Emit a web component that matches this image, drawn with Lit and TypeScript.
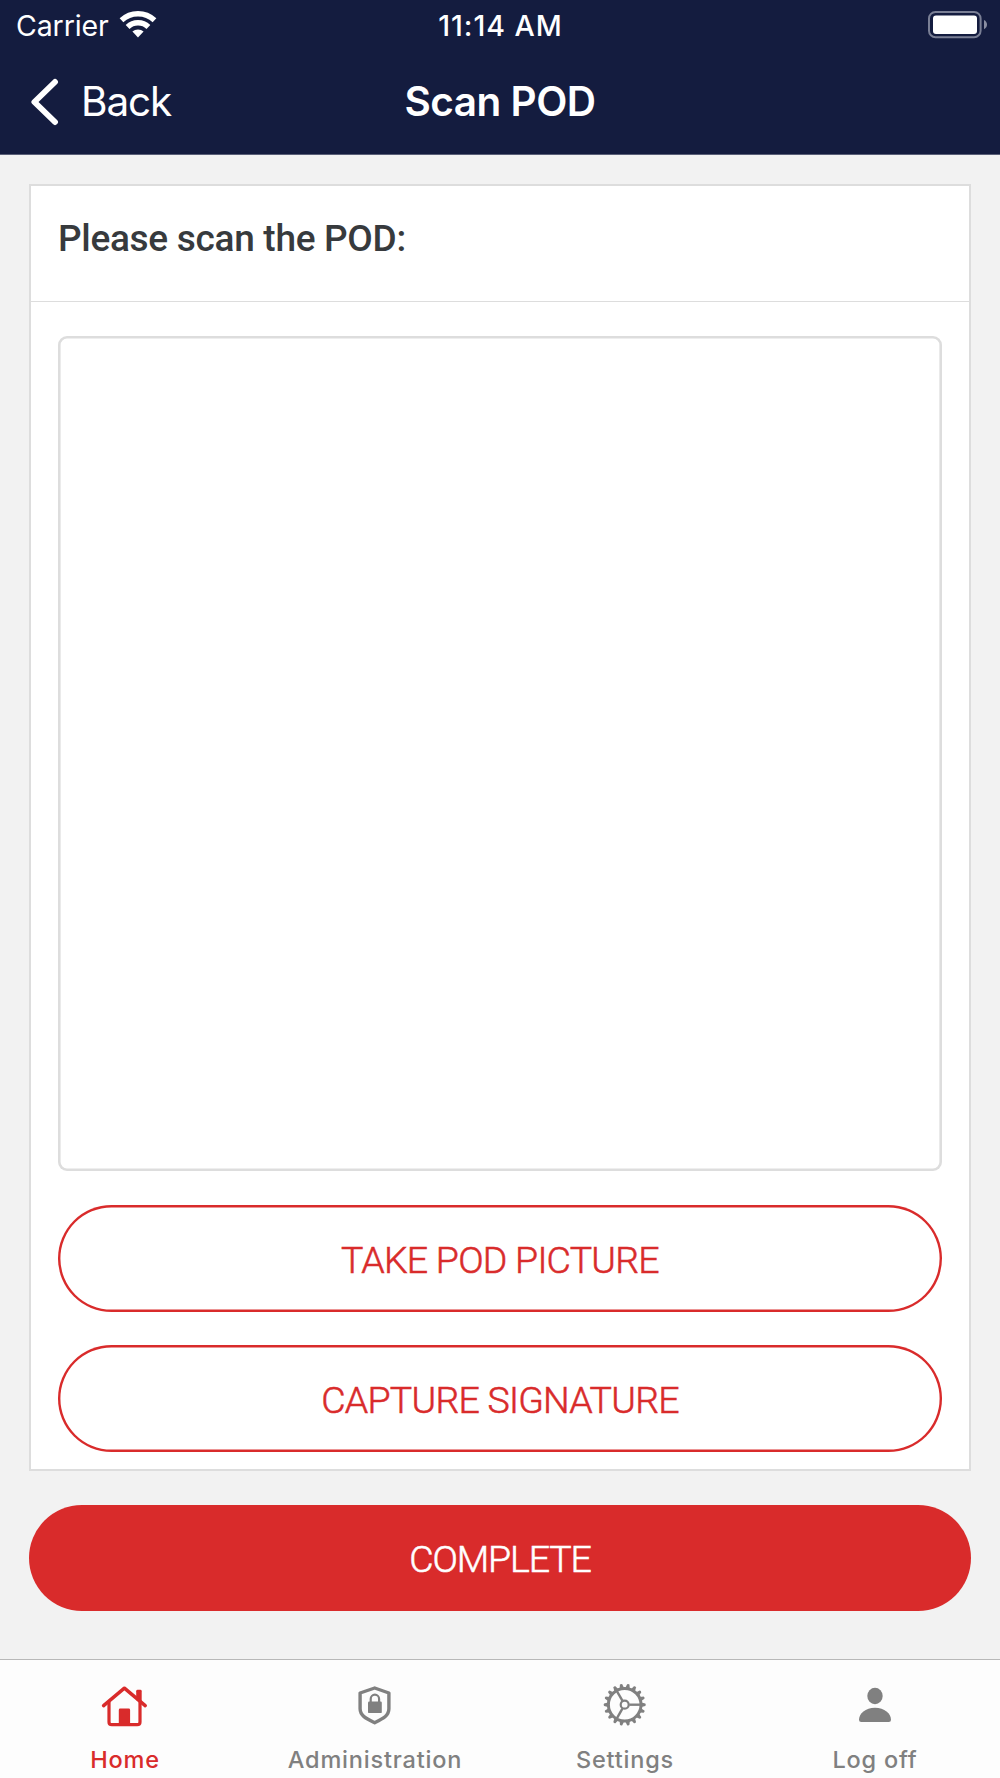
import { LitElement, html, css, svg } from "lit";
import { customElement, property } from "lit/decorators.js";

const teeth = Array.from({ length: 18 }, (_, i) => i * 20);

const icons = {
  home: svg`
    <path d="M36.2 21V12.2q0-1.4 1.4-1.4h2.7q1.4 0 1.4 1.4v13z" fill="currentColor"/>
    <path d="M3.6 26.6L24.4 9.2 45.2 26.6" fill="none" stroke="currentColor" stroke-width="3.5" stroke-linecap="round" stroke-linejoin="round"/>
    <path d="M9 23V42.9Q9 45.7 11.8 45.7H37.2Q40 45.7 40 42.9V23" fill="none" stroke="currentColor" stroke-width="3.2"/>
    <path d="M18.8 46V31q0-1.4 1.4-1.4h8.5q1.4 0 1.4 1.4v15z" fill="currentColor"/>`,
  shield: svg`
    <path d="M24.7 9L38.9 14V29.8C38.9 36.8 33 39.6 24.7 43.7 16.4 39.6 10.1 36.8 10.1 29.8V14z" fill="none" stroke="currentColor" stroke-width="3.4" stroke-linejoin="round"/>
    <rect x="18" y="22.6" width="13.8" height="11.5" rx="1.2" fill="currentColor"/>
    <path d="M20.7 23.5V19.9a4.2 4.2 0 0 1 8.4 0V23.5" fill="none" stroke="currentColor" stroke-width="2.2"/>`,
  gear: svg`
    <g transform="translate(24.7 25.7)" fill="none" stroke="currentColor">
      <circle r="16.3" stroke-width="3"/>
      <circle r="4" stroke-width="2.2"/>
      ${[0, 120, 240].map((a) => svg`<path d="M4.6 0H16" stroke-width="2.4" transform="rotate(${a})"/>`)}
      ${teeth.map((a) => svg`<path d="M16.8-2.2L20.6-1.2Q21.6 0 20.6 1.2L16.8 2.2z" fill="currentColor" stroke="none" transform="rotate(${a})"/>`)}
    </g>`,
  person: svg`
    <ellipse cx="25" cy="17" rx="7.7" ry="8.3" fill="currentColor"/>
    <path d="M11.2 43Q9 43 9 40.8C9 34.5 15.5 28.7 25 28.7S41 34.5 41 40.8Q41 43 38.8 43z" fill="currentColor"/>`,
};

type IconName = keyof typeof icons;

@customElement("tab-item")
class TabItem extends LitElement {
  @property() icon: IconName = "home";
  @property() label = "";

  static styles = css`
    :host { display: flex; flex-direction: column; align-items: center; flex: 1; padding-top: 19px; }
    .icon { width: 50px; height: 50px; display: block; }
    .label { margin-top: 16px; font: 450 23.5px/30px Inter, sans-serif; white-space: nowrap; letter-spacing: 0.8px; }
  `;

  render() {
    return html`
      <svg class="icon" viewBox="0 0 50 50">${icons[this.icon]}</svg>
      <span class="label">${this.label}</span>`;
  }
}

@customElement("app-root")
class AppRoot extends LitElement {
  static styles = css`
    :host { display: block; }
    * { box-sizing: border-box; }
    .screen { height: 1778px; display: flex; flex-direction: column; background: #f2f2f2; overflow: hidden; }
    .header { height: 155px; flex: none; background: #141c3f; color: #fff; border-bottom: 1px solid #5a5f78; font-family: Inter, sans-serif; }
    .status { height: 51px; display: grid; grid-template-columns: 1fr auto 1fr; align-items: center; padding: 0 13px 0 16px; font-size: 28.5px; line-height: 51px; }
    .carrier { display: flex; align-items: center; gap: 10px; }
    .carrier span { letter-spacing: -0.1px; }
    .clock { font-weight: 500; letter-spacing: 1px; margin-left: -2px; }
    .wifi { width: 38px; height: 30px; margin-top: -4px; }
    .battery { width: 60px; height: 28px; justify-self: end; margin-top: -2px; }
    .nav { height: 102px; display: grid; grid-template-columns: 1fr auto 1fr; align-items: center; padding: 0 30px; font-size: 40.5px; line-height: 102px; }
    .back { display: flex; align-items: center; gap: 21px; letter-spacing: -1.1px; }
    .chevron { width: 30px; height: 48px; margin-top: -1px; }
    .title { font-weight: 600; letter-spacing: -0.5px; }
    .main { flex: 1; padding: 29px 29px 0; font-family: Roboto, "Open Sans", sans-serif; }
    .card { height: 1287px; border: 2px solid #ddd; background: #fff; }
    .heading { height: 116px; padding: 27px 27px 0; border-bottom: 1px solid #ddd; color: #373a3d; font-weight: 500; font-size: 37px; line-height: 52px; letter-spacing: -0.3px; }
    .body { padding: 34px 27px 0; }
    .preview { height: 835px; box-shadow: inset 0 0 0 2.6px #ddd; border-radius: 9px; margin-bottom: 34px; }
    .button { display: flex; align-items: center; justify-content: center; height: 107px; border-radius: 54px; font-size: 37.5px; font-weight: 300; -webkit-text-stroke: 0.55px currentColor; letter-spacing: -0.75px; padding-top: 3px; }
    .outline { box-shadow: inset 0 0 0 2.4px #d92b2b; color: #d92b2b; margin-bottom: 33px; }
    .solid { background: #d92b2b; color: #fff; margin-top: 34px; height: 106px; padding-top: 2px; letter-spacing: -1.1px; }
    .tabs { height: 119px; flex: none; display: flex; border-top: 1px solid #b8b8b8; background: #fdfdfd; color: #808080; }
    .active { color: #d92b2b; }
  `;

  render() {
    return html`
      <div class="screen">
        <header class="header">
          <div class="status">
            <div class="carrier"><span>Carrier</span>
              <svg class="wifi" viewBox="0 0 38 30" fill="none" stroke="#fff">
                <path d="M2.5 11.3A24 24 0 0 1 35.5 11.3" stroke-width="5.4"/>
                <path d="M8.6 18A14.8 14.8 0 0 1 29.4 18" stroke-width="5.4"/>
                <path d="M19 28.4L13.4 22.6A8.2 8.2 0 0 1 24.6 22.6z" fill="#fff" stroke="none"/>
              </svg>
            </div>
            <span class="clock">11:14 AM</span>
            <svg class="battery" viewBox="0 0 60 28">
              <rect x="2" y="1" width="51.6" height="25.2" rx="6.5" fill="none" stroke="#7a7f95" stroke-width="2"/>
              <rect x="6" y="4.5" width="44" height="18.4" rx="3" fill="#fff"/>
              <path d="M57 9Q60 10.5 60 13.6T57 18.2z" fill="#8a8ea2"/>
            </svg>
          </div>
          <nav class="nav">
            <div class="back">
              <svg class="chevron" viewBox="0 0 30 48"><path d="M25 4L4.4 24 25 44" fill="none" stroke="#fff" stroke-width="5.9" stroke-linecap="round" stroke-linejoin="round"/></svg>
              <span>Back</span>
            </div>
            <span class="title">Scan POD</span>
          </nav>
        </header>
        <main class="main">
          <section class="card">
            <div class="heading">Please scan the POD:</div>
            <div class="body">
              <div class="preview"></div>
              <div class="button outline">TAKE POD PICTURE</div>
              <div class="button outline">CAPTURE SIGNATURE</div>
            </div>
          </section>
          <div class="button solid">COMPLETE</div>
        </main>
        <footer class="tabs">
          <tab-item class="active" icon="home" label="Home"></tab-item>
          <tab-item icon="shield" label="Administration"></tab-item>
          <tab-item icon="gear" label="Settings"></tab-item>
          <tab-item icon="person" label="Log off"></tab-item>
        </footer>
      </div>`;
  }
}
